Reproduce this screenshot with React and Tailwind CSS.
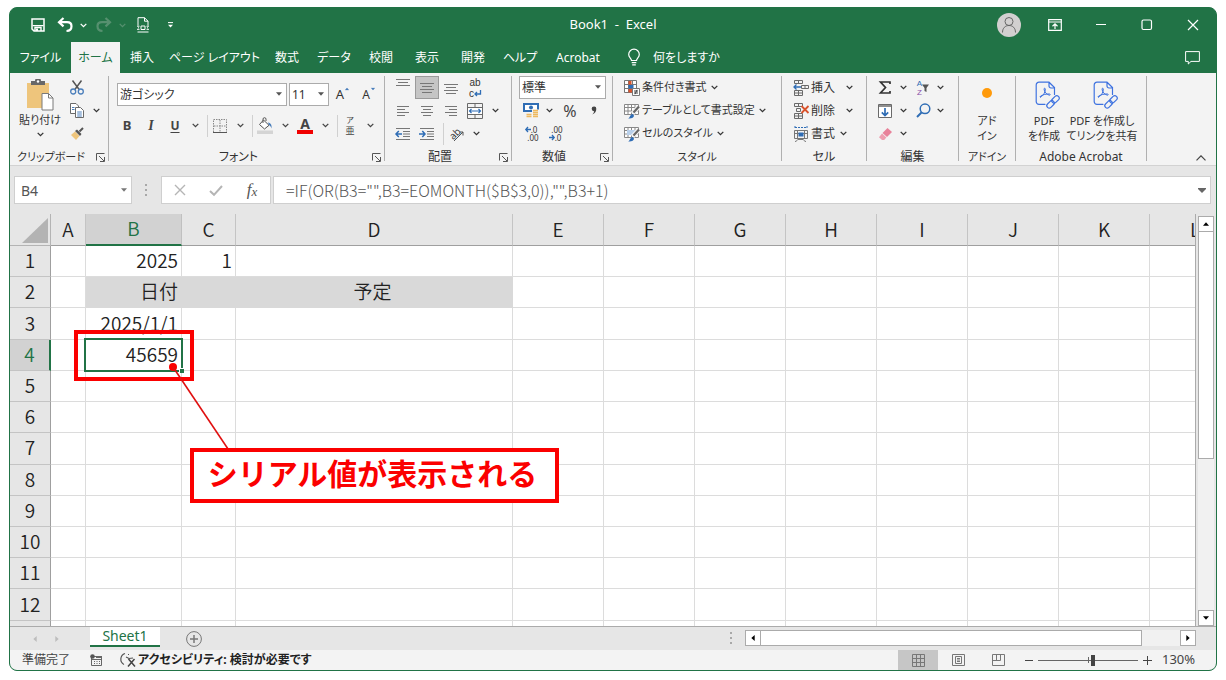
import { clsx } from 'clsx'

/* ---------- Small building blocks ---------- */

function Chevron({ className }) {
  return (
    <svg viewBox="0 0 7 5" className={clsx('w-[7px] h-[5px] shrink-0', className)} fill="none" stroke="currentColor" strokeWidth="1.3">
      <path d="M0.7 0.9 3.5 3.7 6.3 0.9" />
    </svg>
  )
}

function Triangle({ className }) {
  return (
    <svg viewBox="0 0 6 4" className={clsx('w-[6px] h-[4px] shrink-0', className)} fill="currentColor">
      <path d="M0 0.3h6L3 3.7z" />
    </svg>
  )
}

function Btn({ label, className, children }) {
  return (
    <button type="button" aria-label={label} className={clsx('flex h-full shrink-0 items-center justify-center', className)}>
      {children}
    </button>
  )
}

function MenuArrow({ label, className = 'w-4' }) {
  return (
    <Btn label={`${label}のオプション`} className={className}>
      <Chevron />
    </Btn>
  )
}

function Combo({ label, value, className }) {
  return (
    <div className={clsx('relative h-[23px] border border-[#ababab] bg-white', className)}>
      <select aria-label={label} className="block h-full w-full appearance-none truncate bg-transparent pl-0.5 text-[12px] leading-5 outline-none">
        <option>{value}</option>
      </select>
      <Triangle className="pointer-events-none absolute right-1 top-2 text-[#555]" />
    </div>
  )
}

function Group({ label, launcher, className, children }) {
  return (
    <section aria-label={label} className={clsx('flex shrink-0', className)}>
      <div className="flex min-w-0 flex-1 flex-col">
        <div className="h-[76px] pt-[3px]">{children}</div>
        <div className="flex h-4 items-center">
          <span className="flex-1 whitespace-nowrap text-center">{label}</span>
          {launcher && (
            <button type="button" aria-label={`${label}の設定`} className="flex w-4 justify-center">
              <svg viewBox="0 0 9 9" className="h-[9px] w-[9px]" fill="none" stroke="#555">
                <path d="M0.5 7.5v-7h8M3 3l5 5M8.5 4v4.5H4" />
              </svg>
            </button>
          )}
        </div>
      </div>
      <div className="mt-[3px] h-[85px] w-px bg-[#b0b0b0]" />
    </section>
  )
}

const Row = ({ className, children }) => <div className={clsx('flex h-[23px] items-center', className)}>{children}</div>
const Divider = () => <div className="ml-1 h-[22px] w-px bg-[#d0d0d0]" />

const Icon = ({ className = 'h-4 w-4', box = '0 0 16 16', children }) => (
  <svg viewBox={box} className={clsx('shrink-0 overflow-visible', className)} fill="none" stroke="currentColor">
    {children}
  </svg>
)

/* ---------- Title bar and tabs ---------- */

function TitleBar() {
  return (
    <header className="grid h-[34px] shrink-0 grid-cols-[1fr_auto_1fr] items-center text-white">
      <div className="flex h-8 items-center gap-[3px] pl-4">
        <Btn label="上書き保存" className="w-6">
          <Icon className="h-[14px] w-[14px]" box="0 0 14 14">
            <path d="M1 1h12v12H3l-2-2z" strokeWidth="1.5" />
            <path d="M1.500 7.600h11M4 13V9.500h6V13" strokeWidth="1.4" />
            <path d="M5 10.500h2V13H5z" fill="currentColor" stroke="none" />
          </Icon>
        </Btn>
        <div className="flex h-full">
          <Btn label="元に戻す" className="w-6">
            <Icon>
              <path d="M6.500 1 2 5.200l4.500 4.200M2.300 5.200H10c3.200 0 4.500 1.800 4.500 4 0 2.800-2 4.600-5 4.800" strokeWidth="2.200" />
            </Icon>
          </Btn>
          <MenuArrow label="元に戻す" className="w-3" />
        </div>
        <div className="flex h-full text-[#56906f]">
          <Btn label="やり直し" className="w-6">
            <Icon>
              <path d="M9.500 1 14 5.200l-4.500 4.200M13.700 5.200H6c-3.200 0-4.500 1.800-4.500 4 0 2.800 2 4.600 5 4.800" strokeWidth="2.200" />
            </Icon>
          </Btn>
          <MenuArrow label="やり直し" className="w-3" />
        </div>
        <Btn label="印刷プレビュー" className="w-6">
          <Icon className="h-4 w-3" box="0 0 12 16">
            <path d="M1 8.500V0.700h6.500L11 4.200v4.300M7.500 0.700v3.500H11M0.500 15h11" />
            <path d="M4 9h4v3.500H4zM0 9.200h2.500M0 12.300h2.500M9.500 9.200H12M9.500 12.300H12M1 10.800h1M10 10.800h1" />
          </Icon>
        </Btn>
        <Btn label="クイック アクセス ツール バーのユーザー設定" className="w-6">
          <Icon className="h-[6px] w-[5px]" box="0 0 5 6">
            <path d="M0 0.600h5" />
            <path d="M0 2.800h5L2.500 5.500z" fill="currentColor" stroke="none" />
          </Icon>
        </Btn>
      </div>
      <h1 className="whitespace-pre text-[13px]">Book1  -  Excel</h1>
      <div className="flex h-8 items-center justify-end">
        <Btn label="アカウント" className="w-[46px]">
          <Icon className="h-6 w-6" box="0 0 24 24">
            <circle cx="12" cy="12" r="12" fill="#d2d0d0" stroke="none" />
            <circle cx="12" cy="8.500" r="4" stroke="#666" />
            <path d="M5.500 19.500c0-4.500 2.800-7 6.500-7s6.500 2.500 6.500 7" stroke="#666" />
          </Icon>
        </Btn>
        <Btn label="リボンの表示オプション" className="w-[46px]">
          <Icon className="h-3 w-[14px]" box="0 0 14 12">
            <path d="M0.700 0.700h12.600v10.600H0.700zM0.700 3h12.600M7 10V5M4.500 7.200 7 4.800l2.500 2.400" strokeWidth="1.200" />
          </Icon>
        </Btn>
        <Btn label="最小化" className="w-[46px]">
          <Icon className="h-3 w-3" box="0 0 12 12"><path d="M1 5.500h10" /></Icon>
        </Btn>
        <Btn label="最大化" className="w-[46px]">
          <Icon className="h-3 w-3" box="0 0 12 12"><rect x="1" y="1" width="9.500" height="9.500" rx="1.500" strokeWidth="1.200" /></Icon>
        </Btn>
        <Btn label="閉じる" className="w-[46px]">
          <Icon className="h-3 w-3" box="0 0 12 12"><path d="M1 1l10 10M11 1 1 11" strokeWidth="1.200" /></Icon>
        </Btn>
      </div>
    </header>
  )
}

const TABS = [
  { name: 'ファイル', width: 'w-[61px]' },
  { name: 'ホーム', width: 'w-[49px]', active: true },
  { name: '挿入', width: 'w-11' },
  { name: 'ページ レイアウト', width: 'w-[101px]' },
  { name: '数式', width: 'w-11' },
  { name: 'データ', width: 'w-[50px]' },
  { name: '校閲', width: 'w-11' },
  { name: '表示', width: 'w-12' },
  { name: '開発', width: 'w-11' },
  { name: 'ヘルプ', width: 'w-[50px]' },
  { name: 'Acrobat', width: 'w-[66px]' },
]

function TabBar() {
  return (
    <nav className="flex h-[31px] shrink-0 items-stretch text-[12px] text-white">
      {TABS.map((tab) => (
        <button
          key={tab.name}
          type="button"
          className={clsx('shrink-0 whitespace-nowrap', tab.width, tab.active && 'bg-[#f3f3f3] text-[#217346]')}
        >
          {tab.name}
        </button>
      ))}
      <button type="button" className="ml-4 flex items-center gap-3 whitespace-nowrap">
        <Icon className="h-[17px] w-[14px]" box="0 0 14 17">
          <path d="M4.500 11.500C4.500 9.500 1.700 8.500 1.700 5.500a5.300 5.300 0 0 1 10.600 0c0 3-2.800 4-2.800 6zM4.700 13.700h4.600M5.200 15.800h3.600" strokeWidth="1.200" />
        </Icon>
        何をしますか
      </button>
      <Btn label="コメント" className="ml-auto w-12">
        <Icon className="h-[14px] w-[15px]" box="0 0 15 14">
          <path d="M0.600 0.600h13.800v9.800H6L3.300 13v-2.600H0.600z" />
        </Icon>
      </Btn>
    </nav>
  )
}

/* ---------- Ribbon ---------- */

function ClipboardGroup() {
  return (
    <Group label="クリップボード" launcher className="w-[99px] text-[11px]">
      <div className="flex">
        <button type="button" className="flex w-[62px] flex-col items-center pt-[3px]">
          <svg viewBox="0 0 28 32" className="h-8 w-7">
            <path d="M1 4h22v25H1z" fill="#eec57c" />
            <path d="M5 2h4a3 3 0 0 1 6 0h4v4H5z" fill="#686868" />
            <circle cx="12" cy="2.500" r="1.200" fill="#fff" />
            <path d="M16 14.500h6.500l4.500 4.500v12H16z" fill="#fff" stroke="#7a7a7a" />
            <path d="M22.500 14.500V19H27" fill="none" stroke="#7a7a7a" />
          </svg>
          <span className="whitespace-nowrap pt-px leading-4">貼り付け</span>
          <Chevron className="mt-1" />
        </button>
        <div>
          <Row>
            <Btn label="切り取り" className="w-[14px]">
              <Icon className="h-[15px] w-[14px]" box="0 0 14 15">
                <path d="M2.500 0.500 9.500 10M11.500 0.500 4.500 10" stroke="#555" strokeWidth="1.500" />
                <circle cx="3.200" cy="11.500" r="2.500" stroke="#4a7ebb" strokeWidth="1.300" />
                <circle cx="10.800" cy="11.500" r="2.500" stroke="#4a7ebb" strokeWidth="1.300" />
              </Icon>
            </Btn>
          </Row>
          <Row>
            <Btn label="コピー" className="w-[14px]">
              <Icon className="h-[15px] w-[14px]" box="0 0 14 15">
                <path d="M0.500 0.500H6L8.500 3v7.500h-8z" fill="#fff" stroke="#6a6a6a" />
                <path d="M5.500 4.500h5l3 3v7h-8z" fill="#fff" stroke="#6a6a6a" />
                <path d="M7.200 9h4.600M7.200 11h4.600M7.200 13h4.600M2 4.500h2.500M2 6.500h2.500" stroke="#4a7ebb" />
              </Icon>
            </Btn>
            <MenuArrow label="コピー" className="w-6" />
          </Row>
          <Row>
            <Btn label="書式のコピー" className="w-[14px]">
              <Icon className="h-[14px] w-[14px]" box="0 0 14 14">
                <path d="M1 8 5 4.500 9.500 9 6 13z" fill="#eec57c" stroke="none" />
                <path d="M5 4 7 2.500l4.500 4.500L10 9z" fill="#555" stroke="none" />
                <path d="M9.500 4.500 13 1" stroke="#555" strokeWidth="2" />
              </Icon>
            </Btn>
          </Row>
        </div>
      </div>
    </Group>
  )
}

function FontGroup() {
  return (
    <Group label="フォント" launcher className="w-[276px]">
      <Row className="mt-[7px] gap-0.5 pl-2">
        <Combo label="フォント名" value="游ゴシック" className="w-[170px]" />
        <Combo label="フォント サイズ" value="11" className="w-10" />
        <Btn label="フォント サイズの拡大" className="w-6">
          <span className="text-[13px]">A</span>
          <Triangle className="mb-3 rotate-180 scale-75 text-[#4a7ebb]" />
        </Btn>
        <Btn label="フォント サイズの縮小" className="w-6">
          <span className="text-[12px]">A</span>
          <Triangle className="mb-3 scale-75 text-[#4a7ebb]" />
        </Btn>
      </Row>
      <Row className="mt-2 pl-[6px] text-[#444]">
        <Btn label="太字" className="w-6 text-[13px] font-bold">B</Btn>
        <Btn label="斜体" className="w-6 font-['Liberation_Serif',serif] text-[14px] font-bold italic">I</Btn>
        <Btn label="下線" className="w-6 text-[12px] font-bold underline underline-offset-2">U</Btn>
        <MenuArrow label="下線" />
        <Divider />
        <Btn label="罫線" className="w-6">
          <Icon className="h-[14px] w-[14px]" box="0 0 14 14">
            <path d="M0.500 13V0.500h13V13M7 1v12M1 7h12" stroke="#888" strokeDasharray="1.500 1" />
            <path d="M0 13.500h14" stroke="#555" />
          </Icon>
        </Btn>
        <MenuArrow label="罫線" />
        <Divider />
        <Btn label="塗りつぶしの色" className="w-6">
          <Icon className="h-[17px] w-4" box="0 0 16 17">
            <path d="M6.500 3 12 8.300 7.500 12 2.500 7.500z" fill="#fff" stroke="#555" />
            <path d="M6 6V2.200a1.500 1.500 0 0 1 3 0V4" stroke="#555" />
            <path d="M11 5.500c3 .5 4 3 3.500 6-.5-2-1.500-3-2.500-3.200z" fill="#4a7ebb" stroke="none" />
            <path d="M0 13.500h16V17H0z" fill="#d4d4d4" stroke="none" />
          </Icon>
        </Btn>
        <MenuArrow label="塗りつぶしの色" />
        <Btn label="フォントの色" className="w-6 flex-col">
          <span className="text-[14px] font-bold leading-[13px]">A</span>
          <span className="h-1 w-4 bg-[#f00000]" />
        </Btn>
        <MenuArrow label="フォントの色" />
        <Divider />
        <Btn label="ふりがな" className="w-6 flex-col">
          <span className="text-[8px] leading-[10px]">ア</span>
          <span className="text-[9px] leading-[11px]">亜</span>
        </Btn>
        <MenuArrow label="ふりがな" />
      </Row>
    </Group>
  )
}

const ALIGN_TOP = [
  { label: '上揃え', d: 'M0 2.500h14M2 5.500h10M0 8.500h14', box: '0 4 14 14' },
  { label: '上下中央揃え', d: 'M0 2.500h14M2 5.500h10M0 8.500h14M2 11.500h10', box: '0 0 14 14', active: true },
  { label: '下揃え', d: 'M0 3.500h14M2 6.500h10M0 9.500h14M2 12.500h10', box: '0 0 14 14' },
]

const ALIGN_SIDE = [
  { label: '左揃え', d: 'M0 2.500h12M0 5.500h8M0 8.500h12M0 11.500h8' },
  { label: '中央揃え', d: 'M0 2.500h12M2 5.500h8M0 8.500h12M2 11.500h8' },
  { label: '右揃え', d: 'M0 2.500h12M4 5.500h8M0 8.500h12M4 11.500h8' },
]

function AlignGroup() {
  return (
    <Group label="配置" launcher className="w-[127px]">
      <Row className="pl-[6px]">
        {ALIGN_TOP.map((a) => (
          <Btn key={a.label} label={a.label} className={clsx('w-6', a.active && 'border border-[#9a9a9a] bg-[#c5c5c5]')}>
            <Icon className="h-[14px] w-[14px] text-[#777]" box={a.box}><path d={a.d} /></Icon>
          </Btn>
        ))}
        <Btn label="折り返して全体を表示する" className="w-6 flex-col font-['Liberation_Sans',sans-serif] text-[10px] leading-[11px]">
          <span>ab</span>
          <span className="flex items-center">
            c
            <Icon className="h-[7px] w-[7px] text-[#2f6db5]" box="0 0 7 7"><path d="M6.500 0v4H1M3 2 1 4l2 2" strokeWidth="1.300" /></Icon>
          </span>
        </Btn>
      </Row>
      <Row className="pl-[6px]">
        {ALIGN_SIDE.map((a) => (
          <Btn key={a.label} label={a.label} className="w-6">
            <Icon className="h-[14px] w-3 text-[#777]" box="0 0 12 14"><path d={a.d} /></Icon>
          </Btn>
        ))}
        <Btn label="セルを結合して中央揃え" className="w-6">
          <Icon>
            <path d="M0.500 0.500h15v15h-15zM0.500 4.500h15M0.500 11.500h15M8 0.500v4M8 11.500v4" stroke="#6a6a6a" />
            <path d="M1 5h14v6H1z" fill="#fff" stroke="none" />
            <path d="M2.500 8h11M4.500 6l-2 2 2 2M11.500 6l2 2-2 2" stroke="#2f6db5" strokeWidth="1.200" />
          </Icon>
        </Btn>
        <MenuArrow label="セルの結合" />
      </Row>
      <Row className="pl-[6px]">
        <Btn label="インデントを減らす" className="w-6">
          <Icon className="h-[14px] w-4" box="0 0 16 14">
            <path d="M1 1.500h14M8 4.500h7M8 7h7M8 9.500h7M1 12.500h14" stroke="#777" />
            <path d="M7 7H1M3.800 4 1 7l2.800 3" stroke="#2f6db5" strokeWidth="1.500" />
          </Icon>
        </Btn>
        <Btn label="インデントを増やす" className="w-6">
          <Icon className="h-[14px] w-4" box="0 0 16 14">
            <path d="M1 1.500h14M8 4.500h7M8 7h7M8 9.500h7M1 12.500h14" stroke="#777" />
            <path d="M0 7h6M3.300 4 6 7l-2.700 3" stroke="#2f6db5" strokeWidth="1.500" />
          </Icon>
        </Btn>
        <Divider />
        <Btn label="方向" className="w-6">
          <Icon>
            <text x="1" y="12" transform="rotate(-45 6 8)" fontSize="10" fill="#444" stroke="none">ab</text>
            <path d="M6 15 15 6M11.500 6H15v3.500" stroke="#555" />
          </Icon>
        </Btn>
        <MenuArrow label="方向" />
      </Row>
    </Group>
  )
}

function NumberGroup() {
  return (
    <Group label="数値" launcher className="w-[101px]">
      <Row className="pl-[7px]">
        <Combo label="表示形式" value="標準" className="w-[87px]" />
      </Row>
      <Row className="pl-[7px]">
        <Btn label="通貨表示形式" className="w-6">
          <Icon className="h-[15px] w-4" box="0 0 16 15">
            <path d="M1 1h14v7H1z" fill="#fff" stroke="#2f6db5" strokeWidth="2" />
            <circle cx="8" cy="4.500" r="2" fill="#2f6db5" stroke="none" />
            <path d="M9 6.500h7V15H9zM3 10.500h6V15H3z" fill="#f3f3f3" stroke="none" />
            <path d="M10 7.500h5M10 9.500h5M10 11.500h5M10 13.500h5M3.500 11.500h5M3.500 13.500h5" stroke="#eeb95f" strokeWidth="1.400" />
          </Icon>
        </Btn>
        <MenuArrow label="通貨" className="w-3" />
        <Btn label="パーセント スタイル" className="w-[30px] text-[16px] text-[#444]">%</Btn>
        <Btn label="桁区切りスタイル" className="w-[18px]">
          <Icon className="h-[9px] w-[6px]" box="0 0 6 9">
            <path d="M3 0.500a2.200 2.200 0 0 1 2.300 2.300C5.300 5.500 4 7.500 1.300 8.500c1-1 1.700-2 1.700-3.300A2.300 2.300 0 0 1 3 .5z" fill="#444" stroke="none" />
          </Icon>
        </Btn>
      </Row>
      <Row className="pl-[7px]">
        <Btn label="小数点以下の表示桁数を増やす" className="w-6 flex-col">
          <span className="flex items-center text-[8px] leading-[8px]">
            <Icon className="h-[7px] w-[6px] text-[#2f6db5]" box="0 0 6 7"><path d="M6 3.500H1M3 1 0.800 3.500 3 6" strokeWidth="1.300" /></Icon>
            .0
          </span>
          <span className="pl-1 text-[8px] leading-[8px]">.00</span>
        </Btn>
        <Btn label="小数点以下の表示桁数を減らす" className="w-6 flex-col">
          <span className="pl-1 text-[8px] leading-[8px]">.00</span>
          <span className="flex items-center text-[8px] leading-[8px]">
            <Icon className="h-[7px] w-[6px] text-[#2f6db5]" box="0 0 6 7"><path d="M0 3.500h5M3 1l2.200 2.500L3 6" strokeWidth="1.300" /></Icon>
            .0
          </span>
        </Btn>
      </Row>
    </Group>
  )
}

const TableBase = () => <path d="M0.500 1.500h14v10h-14zM0.500 4.500h14M0.500 8h14M4 1.500v10M7.500 1.500v10M11 1.500v10" fill="#fff" stroke="#888" />
const Brush = () => (
  <>
    <path d="M8.500 10.500 15 3.500" stroke="#f3f3f3" strokeWidth="4.500" />
    <path d="M9.500 9.500 15 3.500" stroke="#666" strokeWidth="2.200" />
    <path d="M4 15.500c2-.5 2-4 4.500-4.500l1.500 1.500c0 2-2.500 3.500-6 3z" fill="#2f6db5" stroke="none" />
  </>
)

const STYLE_ITEMS = [
  {
    name: '条件付き書式',
    art: (
      <>
        <path d="M0.500 0.500h12v12h-12zM0.500 4.500h12M0.500 8.500h12M4.500 0.500v12M8.500 0.500v12" fill="#fff" stroke="#777" />
        <path d="M4.500 1h3v3.500h-3zM4.500 9h4v3.500h-4z" fill="#d9532c" stroke="none" />
        <path d="M4.500 5h5v3.500h-5z" fill="#2f6db5" stroke="none" />
        <path d="M8.500 8.500h7v7h-7z" fill="#fff" stroke="#777" />
        <path d="M10 11h4M10 13h4M13 9.800l-2 4.400" stroke="#444" />
      </>
    ),
  },
  { name: 'テーブルとして書式設定', art: <><TableBase /><Brush /></> },
  {
    name: 'セルのスタイル',
    art: (
      <>
        <TableBase />
        <path d="M3 4h9v5H3z" fill="#b9d0ea" stroke="none" />
        <Brush />
      </>
    ),
  },
]

const CELL_ITEMS = [
  {
    name: '挿入',
    menuGap: 'ml-[11px]',
    art: (
      <>
        <path d="M1.500 0.500h8v3h-8zM5.500 0.500v3M1.500 10.500h8v5h-8zM5.500 10.500v5M1.500 13h8M8.500 5.500h7v3h-7zM12 5.500v3" stroke="#6a6a6a" />
        <path d="M8 7H1M3.500 4.500 1 7l2.500 2.500" stroke="#2f6db5" strokeWidth="1.300" />
      </>
    ),
  },
  {
    name: '削除',
    menuGap: 'ml-[11px]',
    art: (
      <>
        <path d="M1.500 0.500h8v3h-8zM5.500 0.500v3M1.500 10.500h8v5h-8zM5.500 10.500v5M1.500 13h8M3.500 5.500h4v3h-4z" stroke="#6a6a6a" />
        <path d="M8.500 3l7 7M15.500 3l-7 7" stroke="#d9532c" strokeWidth="1.800" />
      </>
    ),
  },
  {
    name: '書式',
    menuGap: 'ml-[5px]',
    art: (
      <>
        <path d="M1.500 4.500h13v8h-13zM1.500 7.500h13M4.500 4.500v8M11.500 4.500v8M2 15.500c2 0 2-2 3-2h5c1 0 1 2 3 2" stroke="#777" />
        <path d="M5.500 6.500h5v4h-5z" fill="#2f6db5" stroke="none" />
        <path d="M2 1.500h12M2 0v3M14 0v3" stroke="#2f6db5" strokeDasharray="2 1" />
      </>
    ),
  },
]

function ItemList({ items }) {
  return items.map((item) => (
    <Row key={item.name} className="pl-[11px]">
      <button type="button" className="flex items-center whitespace-nowrap">
        <Icon>{item.art}</Icon>
        <span className="pl-0.5">{item.name}</span>
        <Chevron className={item.menuGap || 'ml-1'} />
      </button>
    </Row>
  ))
}

function EditGroup() {
  return (
    <Group label="編集" className="w-[92px]">
      <Row className="pl-[6px]">
        <Btn label="合計" className="w-6">
          <Icon className="h-[13px] w-3" box="0 0 12 13">
            <path d="M11 3V1H1.500L6.500 6.500 1.500 12H11v-2" strokeWidth="1.700" />
          </Icon>
        </Btn>
        <MenuArrow label="合計" className="w-3" />
        <Btn label="並べ替えとフィルター" className="ml-[3px] w-[22px]">
          <span className="flex flex-col font-['Liberation_Sans',sans-serif] text-[8px] leading-[9px]">
            <span className="text-[#2f6db5]">A</span>
            <span className="text-[#8a4fa8]">Z</span>
          </span>
          <Icon className="h-2 w-[7px]" box="0 0 7 8"><path d="M0 0.500h7L4.500 4v4l-2-1V4z" fill="#555" stroke="none" /></Icon>
        </Btn>
        <MenuArrow label="並べ替え" className="w-3" />
      </Row>
      <Row className="pl-[6px]">
        <Btn label="フィル" className="w-6">
          <Icon className="h-[14px] w-[14px]" box="0 0 14 14">
            <path d="M0.500 0.500h13v13h-13z" fill="#fff" stroke="#6a6a6a" />
            <path d="M0.500 2h13" stroke="#6a6a6a" strokeWidth="1.500" />
            <path d="M7 4v7.500M3.800 8.300 7 11.500l3.200-3.200" stroke="#2f6db5" strokeWidth="1.700" />
          </Icon>
        </Btn>
        <MenuArrow label="フィル" className="w-3" />
        <Btn label="検索と選択" className="ml-[3px] w-[22px]">
          <Icon className="h-[15px] w-[15px] text-[#2f6db5]" box="0 0 15 15">
            <circle cx="9" cy="5.800" r="4.800" strokeWidth="1.500" />
            <path d="M5.500 9.500 1 14" strokeWidth="2" />
          </Icon>
        </Btn>
        <MenuArrow label="検索" className="w-3" />
      </Row>
      <Row className="pl-[6px]">
        <Btn label="クリア" className="w-6">
          <Icon className="h-3 w-[13px]" box="0 0 13 12">
            <path d="M8.500 0 13 4 8 9 3.500 5z" fill="#e8829a" stroke="none" />
            <path d="M3 5.600 7.400 9.600 5.200 12H3L0 9.300z" fill="#ee9fb0" stroke="none" />
          </Icon>
        </Btn>
        <MenuArrow label="クリア" className="w-3" />
      </Row>
    </Group>
  )
}

function PdfIcon() {
  return (
    <svg viewBox="0 0 26 29" className="ml-2 h-[29px] w-[26px]" fill="none" stroke="#3f73e0" strokeWidth="1.200" strokeLinecap="round">
      <path d="M10 23.300H4A2.800 2.800 0 0 1 1.200 20.500V4A2.800 2.800 0 0 1 4 1.200h10L19.500 6.500v7M14 1.500V5a2 2 0 0 0 2 2h3.500" />
      <path d="M5.500 16c2.800-1 5-5 4.800-8 0-1-1.300-1-1.300 0 .3 3 2.500 5.700 5.500 6.200 1 0 1-1 0-1.200-3.200-.3-6.500.7-9 2.200-.8.600-.6 1.200 0 .8z" strokeWidth="1" />
      <rect x="11.300" y="21" width="8.500" height="4.800" rx="2.400" transform="rotate(-45 15.500 23.400)" />
      <rect x="16.200" y="16" width="8.500" height="4.800" rx="2.400" transform="rotate(-45 20.500 18.400)" />
    </svg>
  )
}

function PdfButton({ lines, className }) {
  return (
    <button type="button" className={clsx('flex flex-col items-center whitespace-nowrap pt-[5px] text-[11px] leading-[15px]', className)}>
      <PdfIcon />
      <span className="pt-[3px]">{lines[0]}</span>
      <span>{lines[1]}</span>
    </button>
  )
}

function Ribbon() {
  return (
    <div className="flex h-[93px] shrink-0 border-b border-[#d2d2d2] bg-[#f3f3f3] text-[12px] text-[#333]">
      <ClipboardGroup />
      <FontGroup />
      <AlignGroup />
      <NumberGroup />
      <Group label="スタイル" className="w-[169px] text-[11px]">
        <ItemList items={STYLE_ITEMS} />
      </Group>
      <Group label="セル" className="w-[85px]">
        <ItemList items={CELL_ITEMS} />
      </Group>
      <EditGroup />
      <Group label="アドイン" className="w-[57px] text-[11px]">
        <button type="button" className="flex w-full flex-col items-center pt-3 leading-[15px]">
          <span className="h-[10px] w-[10px] rounded-full bg-[#ff9a0a]" />
          <span className="pt-[15px]">アド</span>
          <span>イン</span>
        </button>
      </Group>
      <Group label="Adobe Acrobat" className="w-[131px]">
        <div className="flex pl-[5px]">
          <PdfButton lines={['PDF', 'を作成']} className="w-[46px]" />
          <PdfButton lines={['PDF を作成し', 'てリンクを共有']} className="w-[70px]" />
        </div>
      </Group>
      <button type="button" aria-label="リボンを折りたたむ" className="ml-auto self-end p-[10px] pb-1">
        <svg viewBox="0 0 10 6" className="h-[6px] w-[10px]" fill="none" stroke="#444" strokeWidth="1.200">
          <path d="M0.500 5.300 5 0.800 9.500 5.300" />
        </svg>
      </button>
    </div>
  )
}

/* ---------- Formula bar ---------- */

function FormulaBar() {
  return (
    <div className="flex h-12 shrink-0 items-center bg-[#e6e6e6] pl-1 pr-[5px] text-[#555]">
      <div className="flex h-[28px] w-[118px] items-center border border-[#cfcfcf] bg-white pr-1">
        <input aria-label="名前ボックス" defaultValue="B4" className="w-full min-w-0 flex-1 bg-transparent pl-[6px] text-[14px] outline-none" />
        <Triangle className="text-[#777]" />
      </div>
      <svg viewBox="0 0 3 12" className="mx-[13px] h-3 w-[3px]" fill="#a8a8a8">
        <path d="M0 0h2v2H0zM0 5h2v2H0zM0 10h2v2H0z" />
      </svg>
      <div className="flex h-[28px] w-[110px] items-center border border-[#cfcfcf] bg-white">
        <Btn label="キャンセル" className="w-9">
          <Icon className="h-3 w-3 text-[#b5b5b5]" box="0 0 12 12"><path d="M1 1l10 10M11 1 1 11" strokeWidth="1.400" /></Icon>
        </Btn>
        <Btn label="入力" className="w-9">
          <Icon className="h-[11px] w-[14px] text-[#b5b5b5]" box="0 0 14 11"><path d="M1 6l4 3.800L13 1" strokeWidth="2" /></Icon>
        </Btn>
        <Btn label="関数の挿入" className="w-9 font-['Liberation_Serif',serif] text-[17px] italic">
          f<span className="pt-1 text-[13px]">x</span>
        </Btn>
      </div>
      <div className="ml-[2px] flex h-[28px] flex-1 items-center border border-[#cfcfcf] bg-white pr-1">
        <input
          aria-label="数式バー"
          defaultValue={'=IF(OR(B3="",B3=EOMONTH($B$3,0)),"",B3+1)'}
          className="min-w-0 flex-1 bg-transparent pl-3 font-['Noto_Sans_CJK_JP',sans-serif] text-[16px] font-light outline-none"
        />
        <svg viewBox="0 0 8 5" className="h-[5px] w-2" fill="#666"><path d="M0 0h8v1L4 5 0 1z" /></svg>
      </div>
    </div>
  )
}

/* ---------- Sheet ---------- */

const COLUMNS = [
  { id: 'A', width: 'w-[35px]' },
  { id: 'B', width: 'w-[96px]' },
  { id: 'C', width: 'w-[54px]' },
  { id: 'D', width: 'w-[277px]' },
  { id: 'E', width: 'w-[91px]' },
  { id: 'F', width: 'w-[91px]' },
  { id: 'G', width: 'w-[91px]' },
  { id: 'H', width: 'w-[91px]' },
  { id: 'I', width: 'w-[91px]' },
  { id: 'J', width: 'w-[91px]' },
  { id: 'K', width: 'w-[91px]' },
  { id: 'L', width: 'w-[91px]' },
]

const CELLS = {
  B1: '2025',
  C1: '1',
  B2: '日付',
  D2: '予定',
  B3: '2025/1/1',
  B4: '45659',
}

const ROWS = Array.from({ length: 12 }, (_, i) => i + 1)

function Cell({ col, row }) {
  const id = col + row
  const shaded = row === 2 && 'BCD'.includes(col)
  return (
    <td
      className={clsx(
        'whitespace-nowrap border-b border-r p-0 pb-0.5 pr-[3px]',
        shaded ? 'border-[#d9d9d9] bg-[#d9d9d9]' : 'border-[#dcdcdc]',
        col === 'D' ? 'text-center' : 'text-right',
        id === 'B4' && 'relative',
      )}
    >
      {CELLS[id]}
      {id === 'B4' && (
        <span className="absolute -inset-x-0.5 -bottom-0.5 -top-0.5 border-2 border-[#217346]">
          <span className="absolute -bottom-[3px] -right-[3px] h-[5px] w-[5px] border-l border-t border-white bg-[#217346]" />
        </span>
      )}
    </td>
  )
}

function Grid() {
  return (
    <table className="h-[438px] w-[1231px] table-fixed border-separate border-spacing-0 font-['Noto_Sans_CJK_JP',sans-serif] text-[19px] font-[350] leading-6 text-[#222] [font-feature-settings:normal]">
      <colgroup>
        <col className="w-[41px]" />
        {COLUMNS.map((c) => <col key={c.id} className={c.width} />)}
      </colgroup>
      <thead>
        <tr className="h-8 bg-[#e6e6e6]">
          <td className="border-b border-r border-[#b4b4b4] p-0 pb-0.5 pr-0.5 align-bottom">
            <svg viewBox="0 0 26 25" className="ml-auto h-[25px] w-[26px]" fill="#b3b3b3"><path d="M26 0v25H0z" /></svg>
          </td>
          {COLUMNS.map((c) => (
            <th
              key={c.id}
              scope="col"
              className={clsx(
                'border-r p-0 pb-0.5 font-[350]',
                c.id === 'B' ? 'border-b-2 border-b-[#217346] border-r-[#c0c0c0] bg-[#d2d2d2] text-[#217346]' : 'border-b border-b-[#9f9f9f] border-r-[#c4c4c4]',
              )}
            >
              {c.id}
            </th>
          ))}
        </tr>
      </thead>
      <tbody>
        {ROWS.map((row) => (
          <tr key={row} className="h-[31px]">
            <th
              scope="row"
              className={clsx(
                'border-b border-b-[#c4c4c4] p-0 pb-0.5 font-[350]',
                row === 4 ? 'border-r-2 border-r-[#217346] bg-[#d2d2d2] text-[#217346]' : 'border-r border-r-[#9f9f9f] bg-[#e6e6e6]',
              )}
            >
              {row}
            </th>
            {COLUMNS.map((c) => <Cell key={c.id} col={c.id} row={row} />)}
          </tr>
        ))}
        <tr className="h-[31px]">
          <td className="border-r border-[#9f9f9f] bg-[#e6e6e6] p-0" />
          {COLUMNS.map((c) => <td key={c.id} className="border-r border-[#dcdcdc] p-0" />)}
        </tr>
      </tbody>
    </table>
  )
}

function Callout() {
  return (
    <>
      <div className="absolute left-16 top-[116px] h-[51px] w-[120px] border-4 border-[#fb0000]" />
      <svg viewBox="0 0 80 90" className="absolute left-[155px] top-[145px] h-[90px] w-20">
        <circle cx="8" cy="8" r="4" fill="#fb0000" />
        <path d="M8 8 63 90" stroke="#e01010" strokeWidth="1.600" />
      </svg>
      <p className="absolute left-[180px] top-[234px] flex h-[55px] w-[369px] items-center justify-center whitespace-nowrap border-4 border-[#fb0000] bg-white pb-1 pr-1 text-[30px] font-bold leading-10 text-[#fb0000] [font-feature-settings:normal]">
        シリアル値が表示される
      </p>
    </>
  )
}

const scrollBtn = 'flex items-center justify-center border border-[#ababab] bg-white'

function Sheet() {
  return (
    <main className="flex min-h-0 flex-1 bg-[#e6e6e6]">
      <div className="relative min-w-0 flex-1 overflow-hidden border-r border-[#ababab] bg-white">
        <Grid />
        <Callout />
      </div>
      <div className="flex w-5 flex-col pl-0.5 pr-0.5 pt-0.5">
        <button type="button" aria-label="上へスクロール" className={clsx(scrollBtn, 'h-4')}>
          <Triangle className="rotate-180 text-black" />
        </button>
        <div className="min-h-0 flex-1 bg-[#f1f1f1]">
          <div className="h-[60%] border border-t-0 border-[#ababab] bg-white" />
        </div>
        <button type="button" aria-label="下へスクロール" className={clsx(scrollBtn, 'h-4')}>
          <Triangle className="text-black" />
        </button>
      </div>
    </main>
  )
}

function SheetTabs() {
  return (
    <div className="flex h-6 shrink-0 border-t border-[#ababab] bg-[#e6e6e6]">
      <div className="flex w-20 items-center gap-4 pl-[22px] text-[#bdbdbd]">
        <Triangle className="rotate-90" />
        <Triangle className="-rotate-90" />
      </div>
      <button type="button" className="h-5 w-[70px] border-b-2 border-[#217346] bg-white text-[14px] leading-4 text-[#217346]">
        Sheet1
      </button>
      <Btn label="新しいシート" className="ml-6 w-5">
        <Icon className="h-4 w-4 text-[#777]">
          <circle cx="8" cy="8" r="7.400" />
          <path d="M8 4v8M4 8h8" strokeWidth="1.500" />
        </Icon>
      </Btn>
      <div className="ml-auto flex w-[486px] items-center pb-0.5">
        <svg viewBox="0 0 3 12" className="mr-3 h-3 w-[3px]" fill="#a8a8a8">
          <path d="M0 0h2v2H0zM0 5h2v2H0zM0 10h2v2H0z" />
        </svg>
        <button type="button" aria-label="左へスクロール" className={clsx(scrollBtn, 'h-4 w-4')}>
          <Triangle className="rotate-90 text-black" />
        </button>
        <div className="flex h-4 flex-1 bg-[#f1f1f1]">
          <div className="w-[91%] border border-l-0 border-[#ababab] bg-white" />
        </div>
        <button type="button" aria-label="右へスクロール" className={clsx(scrollBtn, 'mr-5 h-4 w-4')}>
          <Triangle className="-rotate-90 text-black" />
        </button>
      </div>
    </div>
  )
}

function StatusBar() {
  return (
    <footer className="flex h-5 shrink-0 items-center bg-[#f3f3f3] pl-3 text-[12px] text-[#444]">
      <span className="whitespace-nowrap">準備完了</span>
      <Btn label="マクロの記録" className="ml-5 w-3">
        <Icon className="h-3 w-3" box="0 0 12 12">
          <path d="M1.500 2.500h10v9h-10zM1.500 5.500h10M4 7.500h1M6.500 7.500h1M9 7.500h1M4 9.500h1M6.500 9.500h1M9 9.500h1" stroke="#666" />
          <circle cx="2.500" cy="2.500" r="2.300" fill="#555" stroke="none" />
          <path d="M6 2h6v2H6z" fill="#666" stroke="none" />
        </Icon>
      </Btn>
      <button type="button" className="ml-[18px] flex items-center whitespace-nowrap text-[#222]">
        <Icon className="h-[14px] w-4" box="0 0 16 14">
          <path d="M5 0.500A6 6 0 0 0 4 11.500M8 1.500h1M6 4l3 1.500 4-.500" stroke="#555" strokeWidth="1.200" />
          <path d="M8.500 6 15 13.500M14.500 6 8 13.500" stroke="#444" strokeWidth="1.500" />
        </Icon>
        <span className="pl-0.5 font-bold">アクセシビリティ: 検討が必要です</span>
      </button>
      <div className="ml-auto flex h-full items-center">
        <Btn label="標準" className="w-10 bg-[#c6c6c6]">
          <Icon className="h-[13px] w-[13px]" box="0 0 13 13"><path d="M0.500 0.500h12v12h-12zM4.500 0.500v12M8.500 0.500v12M0.500 4.500h12M0.500 8.500h12" stroke="#777" /></Icon>
        </Btn>
        <Btn label="ページ レイアウト" className="w-10">
          <Icon className="h-3 w-[13px]" box="0 0 13 12"><path d="M0.500 0.500h12v11h-12zM3.500 2.500h6v7h-6zM5 4.500h3M5 6h3M5 7.500h3" stroke="#777" /></Icon>
        </Btn>
        <Btn label="改ページ プレビュー" className="w-10">
          <Icon className="h-3 w-[13px]" box="0 0 13 12"><path d="M0.500 0.500h12v11h-12zM4.500 0.500v6M8.500 0.500v6M0.500 6.500h8" stroke="#777" /></Icon>
        </Btn>
        <Btn label="縮小" className="ml-1 w-[14px]">
          <Icon className="h-2 w-2" box="0 0 8 8"><path d="M0 4.500h8" /></Icon>
        </Btn>
        <div className="relative mx-0.5 flex h-full w-[100px] items-center">
          <input
            type="range"
            aria-label="ズーム"
            min="10"
            max="190"
            defaultValue="110"
            className="h-3 w-full appearance-none bg-transparent [&::-webkit-slider-runnable-track]:h-px [&::-webkit-slider-runnable-track]:bg-[#666] [&::-webkit-slider-thumb]:-mt-[5px] [&::-webkit-slider-thumb]:h-[11px] [&::-webkit-slider-thumb]:w-1 [&::-webkit-slider-thumb]:appearance-none [&::-webkit-slider-thumb]:bg-[#444]"
          />
          <span className="pointer-events-none absolute left-1/2 top-[7px] h-[6px] w-px bg-[#666]" />
        </div>
        <Btn label="拡大" className="w-[14px]">
          <Icon className="h-[9px] w-[9px]" box="0 0 9 9"><path d="M0 4.500h9M4.500 0v9" /></Icon>
        </Btn>
        <span className="w-[62px] pl-2 text-[13px]">130%</span>
      </div>
    </footer>
  )
}

export default function App() {
  return (
    <div className="h-screen bg-white px-[9px] pb-[9px] pt-[7px] font-['Noto_Sans','Noto_Sans_CJK_JP',sans-serif] [font-feature-settings:'palt']">
      <div className="flex h-full flex-col overflow-hidden rounded-lg border border-[#217346] bg-[#217346]">
        <TitleBar />
        <TabBar />
        <Ribbon />
        <FormulaBar />
        <Sheet />
        <SheetTabs />
        <StatusBar />
      </div>
    </div>
  )
}
